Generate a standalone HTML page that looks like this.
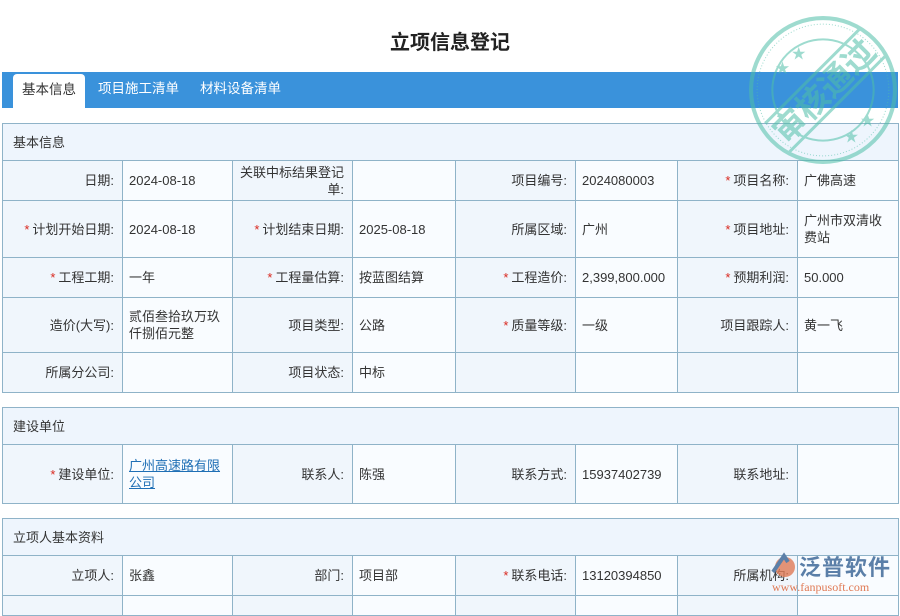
<!DOCTYPE html>
<html><head><meta charset="utf-8">
<style>
*{margin:0;padding:0;box-sizing:border-box}
body{width:900px;height:600px;overflow:hidden;background:#fff;font-family:"Liberation Sans","Noto Sans CJK SC",sans-serif;font-size:13px;color:#333;position:relative}
h1{position:absolute;top:26px;left:0;width:900px;text-align:center;font-size:20px;font-weight:bold;color:#222}
.tabs{position:absolute;top:72px;left:2px;width:896px;height:36px;background:#3a92db}
.tab{position:absolute;top:0;height:36px;line-height:33px;color:#fff;font-size:13.5px}
.tab.on{background:#fff;color:#333;left:11px;width:72px;top:2px;height:34px;line-height:31px;text-align:center;border-radius:4px 4px 0 0}
table{position:absolute;left:2px;width:896px;border-collapse:collapse;table-layout:fixed}
td{border:1px solid #8fb3c8;padding:0 6px;vertical-align:middle;line-height:17px}
td.l{background:#f0f6fc;text-align:right;padding-right:8px}
td.v{background:#f9fcff}
td.h{background:#eef5fd;height:37px;padding-left:10px}
.r{color:#d9281f;margin-right:3px}
a{color:#1f6fb5;text-decoration:underline}
.stamp{position:absolute;left:747px;top:14px;width:152px;height:152px;opacity:.55}
.logo{position:absolute;left:770px;top:552px;}
</style></head><body>
<h1>立项信息登记</h1>
<div class="tabs">
<div class="tab on">基本信息</div>
<div class="tab" style="left:96px">项目施工清单</div>
<div class="tab" style="left:198px">材料设备清单</div>
</div>
<table style="top:123px">
<colgroup><col style="width:120px"><col style="width:110px"><col style="width:120px"><col style="width:103px"><col style="width:120px"><col style="width:102px"><col style="width:120px"><col style="width:101px"></colgroup>
<tr><td class="h" colspan="8">基本信息</td></tr>
<tr style="height:40px"><td class="l">日期:</td><td class="v">2024-08-18</td><td class="l">关联中标结果登记单:</td><td class="v"></td><td class="l">项目编号:</td><td class="v">2024080003</td><td class="l"><span class="r">*</span>项目名称:</td><td class="v">广佛高速</td></tr>
<tr style="height:57px"><td class="l"><span class="r">*</span>计划开始日期:</td><td class="v">2024-08-18</td><td class="l"><span class="r">*</span>计划结束日期:</td><td class="v">2025-08-18</td><td class="l">所属区域:</td><td class="v">广州</td><td class="l"><span class="r">*</span>项目地址:</td><td class="v">广州市双清收费站</td></tr>
<tr style="height:40px"><td class="l"><span class="r">*</span>工程工期:</td><td class="v">一年</td><td class="l"><span class="r">*</span>工程量估算:</td><td class="v">按蓝图结算</td><td class="l"><span class="r">*</span>工程造价:</td><td class="v">2,399,800.000</td><td class="l"><span class="r">*</span>预期利润:</td><td class="v">50.000</td></tr>
<tr style="height:55px"><td class="l">造价(大写):</td><td class="v">贰佰叁拾玖万玖仟捌佰元整</td><td class="l">项目类型:</td><td class="v">公路</td><td class="l"><span class="r">*</span>质量等级:</td><td class="v">一级</td><td class="l">项目跟踪人:</td><td class="v">黄一飞</td></tr>
<tr style="height:40px"><td class="l">所属分公司:</td><td class="v"></td><td class="l">项目状态:</td><td class="v">中标</td><td class="l"></td><td class="v"></td><td class="l"></td><td class="v"></td></tr>
</table>
<table style="top:407px">
<colgroup><col style="width:120px"><col style="width:110px"><col style="width:120px"><col style="width:103px"><col style="width:120px"><col style="width:102px"><col style="width:120px"><col style="width:101px"></colgroup>
<tr><td class="h" colspan="8">建设单位</td></tr>
<tr style="height:59px"><td class="l"><span class="r">*</span>建设单位:</td><td class="v"><a>广州高速路有限公司</a></td><td class="l">联系人:</td><td class="v">陈强</td><td class="l">联系方式:</td><td class="v">15937402739</td><td class="l">联系地址:</td><td class="v"></td></tr>
</table>
<table style="top:518px">
<colgroup><col style="width:120px"><col style="width:110px"><col style="width:120px"><col style="width:103px"><col style="width:120px"><col style="width:102px"><col style="width:120px"><col style="width:101px"></colgroup>
<tr><td class="h" colspan="8">立项人基本资料</td></tr>
<tr style="height:40px"><td class="l">立项人:</td><td class="v">张鑫</td><td class="l">部门:</td><td class="v">项目部</td><td class="l"><span class="r">*</span>联系电话:</td><td class="v">13120394850</td><td class="l">所属机构:</td><td class="v"></td></tr>
<tr style="height:20px"><td class="l"></td><td class="v"></td><td class="l"></td><td class="v"></td><td class="l"></td><td class="v"></td><td class="l"></td><td class="v"></td></tr>
</table>
<svg class="stamp" viewBox="0 0 150 150">
<g fill="none" stroke="#4fbfa8">
<circle cx="75" cy="75" r="71" stroke-width="4"/>
<circle cx="75" cy="75" r="65" stroke-width="1" stroke-dasharray="1 2"/>
<circle cx="75" cy="75" r="50" stroke-width="2"/>
<line x1="18" y1="108" x2="112" y2="14" stroke-width="3"/>
<line x1="42" y1="136" x2="136" y2="42" stroke-width="3"/>
</g>
<text x="75" y="88" fill="#4fbfa8" font-size="32" font-weight="bold" text-anchor="middle" transform="rotate(-45 75 75)" font-family="Noto Sans CJK SC,sans-serif">审核通过</text>
<g fill="#4fbfa8" font-size="14"><text x="28" y="58">★</text><text x="44" y="44">★</text><text x="96" y="126">★</text><text x="112" y="110">★</text></g>
</svg>
<div class="logo">
<svg width="28" height="28" style="position:absolute;left:0;top:0" viewBox="0 0 28 28"><circle cx="15" cy="15" r="10" fill="#e07a55" opacity=".8"/><path d="M3 20 L14 4 L18 10" stroke="#5b7fa8" stroke-width="4" fill="none"/></svg>
<div style="position:absolute;left:29px;top:-2px;font-size:22px;font-weight:bold;color:#5b7fa8;white-space:nowrap;letter-spacing:1px">泛普软件</div>
<div style="position:absolute;left:2px;top:28px;font-size:12px;color:#e07a55;white-space:nowrap;font-family:'Liberation Serif',serif">www.fanpusoft.com</div>
</div>
</body></html>
